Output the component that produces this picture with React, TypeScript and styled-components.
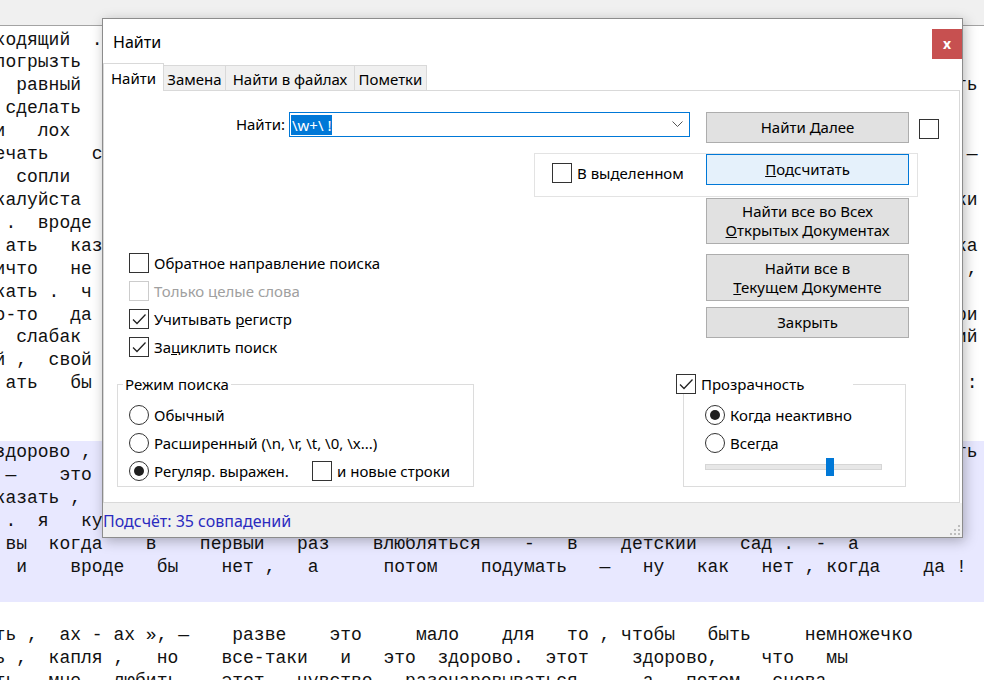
import React from 'react';
import styled, { createGlobalStyle } from 'styled-components';

const GlobalStyle = createGlobalStyle`
  html, body {
    margin: 0;
    padding: 0;
    background: #fff;
    overflow: hidden;
  }
`;

const UI_FONT = `"Noto Sans", "Open Sans", sans-serif`;

// editor text: each line is a list of [column, text] pairs (monospace grid)
type Piece = [number, string];

const place = (pieces: Piece[]) =>
  pieces.reduce((line, [col, text]) => line.padEnd(col, ' ') + text, '');

const LINES: { pieces: Piece[]; marked?: boolean }[] = [
  { pieces: [[0, 'ходящий'], [9, '.']] },
  { pieces: [[0, 'погрызть']] },
  { pieces: [[2, 'равный'], [89, 'ть']] },
  { pieces: [[1, 'сделать']] },
  { pieces: [[0, 'и'], [4, 'лох']] },
  { pieces: [[0, 'ечать'], [9, 'со'], [90, '—']] },
  { pieces: [[2, 'сопли']] },
  { pieces: [[0, 'калуйста'], [89, 'ки']] },
  { pieces: [[1, '.'], [4, 'вроде']] },
  { pieces: [[1, 'ать'], [7, 'каз'], [89, 'ка']] },
  { pieces: [[0, 'ичто'], [7, 'не'], [90, ',']] },
  { pieces: [[0, 'кать'], [5, '.'], [8, 'ч']] },
  { pieces: [[0, 'о-то'], [7, 'да'], [89, 'ри']] },
  { pieces: [[2, 'слабак'], [89, 'ий']] },
  { pieces: [[0, 'й'], [2, ','], [5, 'свой']] },
  { pieces: [[1, 'ать'], [7, 'бы'], [90, ':']] },
  { pieces: [] },
  { pieces: [] },
  { pieces: [[0, 'здорово'], [8, ','], [89, 'ть']], marked: true },
  { pieces: [[1, '—'], [6, 'это']], marked: true },
  { pieces: [[0, 'казать'], [7, ',']], marked: true },
  { pieces: [[1, '.'], [4, 'я'], [8, 'ку']], marked: true },
  {
    pieces: [
      [1, 'вы'], [5, 'когда'], [14, 'в'], [19, 'первый'], [28, 'раз'],
      [35, 'влюбляться'], [49, '-'], [53, 'в'], [58, 'детский'], [69, 'сад'],
      [73, '.'], [76, '-'], [79, 'а'],
    ],
    marked: true,
  },
  {
    pieces: [
      [2, 'и'], [7, 'вроде'], [15, 'бы'], [21, 'нет'], [25, ','], [29, 'а'],
      [36, 'потом'], [45, 'подумать'], [56, '—'], [60, 'ну'], [65, 'как'],
      [71, 'нет'], [75, ','], [77, 'когда'], [86, 'да'], [89, '!'],
    ],
    marked: true,
  },
  { pieces: [], marked: true },
  { pieces: [] },
  {
    pieces: [
      [0, 'ть'], [3, ','], [6, 'ах'], [9, '-'], [11, 'ах'], [14, '»,'], [17, '—'],
      [22, 'разве'], [31, 'это'], [39, 'мало'], [47, 'для'], [53, 'то'], [56, ','],
      [58, 'чтобы'], [66, 'быть'], [75, 'немножечко'],
    ],
  },
  {
    pieces: [
      [0, 'ь'], [2, ','], [5, 'капля'], [11, ','], [15, 'но'], [21, 'все-таки'],
      [32, 'и'], [36, 'это'], [41, 'здорово'], [48, '.'], [51, 'этот'],
      [59, 'здорово'], [66, ','], [71, 'что'], [77, 'мы'],
    ],
  },
  {
    pieces: [
      [0, 'ть'], [5, 'мне'], [11, 'любить'], [21, 'этот'], [28, 'чувство'],
      [38, 'разочаровываться'], [57, ','], [60, 'а'], [64, 'потом'], [72, 'снова'],
    ],
  },
];

const Screen = styled.div`
  position: relative;
  width: 984px;
  height: 680px;
  overflow: hidden;
  display: flex;
  flex-direction: column;
  background: #fff;
`;

const TopStrip = styled.div`
  flex: none;
  height: 25px;
  background: #f0f0f0;
`;

const Editor = styled.div`
  flex: 1;
  border-top: 1px solid #a3a3a3;
  padding-top: 2.5px;
  font-family: "Liberation Mono", "Courier New", monospace;
  font-size: 18px;
  color: #111;
`;

const CodeLine = styled.div<{ $marked?: boolean }>`
  height: 22.93px;
  line-height: 22.93px;
  white-space: pre;
  text-indent: -5.4px;
  background: ${(p) => (p.$marked ? '#e8e8ff' : 'transparent')};
`;

/* ---------- dialog window ---------- */

const Dialog = styled.section`
  position: absolute;
  left: 102px;
  top: 18px;
  width: 861px;
  height: 520px;
  box-sizing: border-box;
  border: 1px solid #8c8c8c;
  background: #fff;
  box-shadow: 2px 3px 12px rgba(0, 0, 0, 0.28);
  display: flex;
  flex-direction: column;
  font-family: ${UI_FONT};
  font-size: 15px;
  color: #000;
`;

const TitleBar = styled.header`
  flex: none;
  height: 43px;
  display: flex;
  align-items: flex-start;
  padding-left: 10px;
`;

const Title = styled.h1`
  flex: 1;
  margin: 12px 0 0;
  font-size: 16px;
  font-weight: 400;
  line-height: 22px;
`;

const CloseButton = styled.button`
  width: 30px;
  height: 30px;
  margin-top: 10px;
  padding: 0 0 2px;
  border: 0;
  background: #c75050;
  color: #fff;
  font: 700 14px ${UI_FONT};
  display: flex;
  align-items: center;
  justify-content: center;
`;

const TabStrip = styled.nav`
  flex: none;
  height: 29px;
  margin-bottom: -1px;
  display: flex;
  align-items: flex-end;
  position: relative;
  z-index: 1;
`;

const Tab = styled.div<{ $active?: boolean; $w: number }>`
  box-sizing: border-box;
  width: ${(p) => p.$w}px;
  height: ${(p) => (p.$active ? 28 : 25)}px;
  margin-bottom: ${(p) => (p.$active ? 0 : 1)}px;
  margin-right: -1px;
  padding-top: ${(p) => (p.$active ? 0 : 2)}px;
  border: 1px solid #d9d9d9;
  border-bottom: none;
  background: ${(p) => (p.$active ? '#fff' : '#f0f0f0')};
  display: flex;
  align-items: center;
  justify-content: center;
  line-height: 20px;
  white-space: nowrap;
`;

const Panel = styled.div`
  flex: 1;
  margin-right: 2px;
  padding-top: 21px;
  border: 1px solid #d9d9d9;
  display: grid;
  grid-template-columns: 602px 203px 1fr;
  grid-template-rows: 41px 44px 177px auto;
`;

const FindRow = styled.div`
  grid-column: 1;
  grid-row: 1;
  display: flex;
  align-items: flex-start;
  justify-content: flex-end;
  gap: 4px;
  padding-right: 16px;
`;

const FieldLabel = styled.label`
  line-height: 25px;
`;

const Combo = styled.div`
  box-sizing: border-box;
  width: 401px;
  height: 25px;
  border: 1px solid #0078d7;
  display: flex;
  align-items: center;
  padding: 0 6px 0 1px;
`;

const Selected = styled.span`
  padding: 0 1px;
  line-height: 20px;
  background: #0078d7;
  color: #fff;
  white-space: pre;
`;

const ComboArrow = styled.svg`
  margin-left: auto;
`;

const ActionButton = styled.button<{ $focused?: boolean; $h: number; $mt?: number }>`
  box-sizing: border-box;
  width: 203px;
  height: ${(p) => p.$h}px;
  margin-top: ${(p) => p.$mt ?? 0}px;
  padding: 0;
  border: 1px solid ${(p) => (p.$focused ? '#0078d7' : '#adadad')};
  background: ${(p) => (p.$focused ? '#e5f1fb' : '#e1e1e1')};
  color: #000;
  font: 15px/19px ${UI_FONT};
`;

const NextButton = styled(ActionButton)`
  grid-column: 2;
  grid-row: 1;
`;

const CountButton = styled(ActionButton)`
  grid-column: 2;
  grid-row: 2;
  z-index: 1;
`;

const SideBox = styled.div`
  grid-column: 3;
  grid-row: 1;
  padding: 7px 0 0 10px;
`;

const ScopeBox = styled.div`
  grid-column: 1 / 4;
  grid-row: 2;
  margin: 0 41px 0 430px;
  padding: 5px 0 0 17px;
  border: 1px solid #e3e3e3;
`;

const CheckList = styled.div`
  grid-column: 1;
  grid-row: 3;
  padding: 52px 0 0 25px;
`;

const ButtonStack = styled.div`
  grid-column: 2;
  grid-row: 3;
  display: flex;
  flex-direction: column;
  padding-top: 1px;
`;

const BottomRow = styled.div`
  grid-column: 1 / -1;
  grid-row: 4;
  display: flex;
  align-items: flex-start;
  padding-left: 13px;
`;

const Group = styled.fieldset<{ $w: number; $ml?: number; $pl: number }>`
  box-sizing: border-box;
  width: ${(p) => p.$w}px;
  height: 113px;
  min-width: 0;
  margin: 0 0 0 ${(p) => p.$ml ?? 0}px;
  padding: 7px 0 0 ${(p) => p.$pl}px;
  border: 1px solid #dcdcdc;
`;

const GroupLegend = styled.legend<{ $offset: number; $w?: number }>`
  box-sizing: border-box;
  width: ${(p) => (p.$w ? `${p.$w}px` : 'auto')};
  margin-left: ${(p) => p.$offset}px;
  padding: 0 2px;
  line-height: 20px;
  background: #fff;
`;

const Option = styled.label<{ $disabled?: boolean; $w?: number }>`
  height: 28px;
  width: ${(p) => (p.$w ? `${p.$w}px` : 'auto')};
  display: flex;
  align-items: center;
  gap: 5px;
  white-space: nowrap;
  color: ${(p) => (p.$disabled ? '#a0a0a0' : '#000')};
`;

const LegendOption = styled(Option)`
  height: 20px;
`;

const OptionText = styled.span`
  line-height: 20px;
`;

const OptionRow = styled.div`
  display: flex;
  align-items: center;
`;

const Box = styled.span<{ $disabled?: boolean }>`
  box-sizing: border-box;
  flex: none;
  width: 20px;
  height: 20px;
  border: 1px solid ${(p) => (p.$disabled ? '#cccccc' : '#333')};
  background: #fff;
  display: flex;
  align-items: center;
  justify-content: center;
`;

const Round = styled.span<{ $on?: boolean }>`
  box-sizing: border-box;
  flex: none;
  width: 20px;
  height: 20px;
  border: 1px solid #333;
  border-radius: 50%;
  background: #fff;
  display: flex;
  align-items: center;
  justify-content: center;

  &::after {
    content: '';
    display: ${(p) => (p.$on ? 'block' : 'none')};
    width: 10px;
    height: 10px;
    border-radius: 50%;
    background: #1f1f1f;
  }
`;

const Slider = styled.div`
  position: relative;
  width: 177px;
  height: 20px;
  display: flex;
  align-items: center;
`;

const Track = styled.div`
  box-sizing: border-box;
  width: 100%;
  height: 6px;
  border: 1px solid #d6d6d6;
  background: #e7e7e7;
`;

const Thumb = styled.div`
  position: absolute;
  top: 1px;
  width: 8px;
  height: 18px;
  background: #0078d7;
`;

const StatusBar = styled.footer`
  flex: none;
  height: 34px;
  padding-top: 2px;
  box-sizing: border-box;
  background: #f0f0f0;
  display: flex;
  align-items: center;
  color: #2b2bbf;
  font-size: 16px;
`;

const Grip = styled.svg`
  margin: auto 2px 2px auto;
  align-self: flex-end;
`;

const Checkbox: React.FC<{ checked?: boolean; disabled?: boolean }> = ({ checked, disabled }) => (
  <Box $disabled={disabled}>
    {checked && (
      <svg width="16" height="16" viewBox="0 0 16 16">
        <polyline points="2,8.5 6,12.5 14.5,3.5" fill="none" stroke="#222" strokeWidth="1.3" />
      </svg>
    )}
  </Box>
);

const App: React.FC = () => {
  return (
    <>
      <GlobalStyle />
      <Screen>
        <TopStrip />
        <Editor>
          {LINES.map((line, i) => (
            <CodeLine key={i} $marked={line.marked}>
              {place(line.pieces) || ' '}
            </CodeLine>
          ))}
        </Editor>

        <Dialog>
          <TitleBar>
            <Title>Найти</Title>
            <CloseButton>x</CloseButton>
          </TitleBar>

          <TabStrip>
            <Tab $active $w={61}>Найти</Tab>
            <Tab $w={63}>Замена</Tab>
            <Tab $w={130}>Найти в файлах</Tab>
            <Tab $w={73}>Пометки</Tab>
          </TabStrip>

          <Panel>
            <FindRow>
              <FieldLabel>Найти:</FieldLabel>
              <Combo>
                <Selected>{'\\w+\\ !'}</Selected>
                <ComboArrow width="11" height="7" viewBox="0 0 11 7">
                  <polyline points="0.5,0.5 5.5,5.5 10.5,0.5" fill="none" stroke="#555" strokeWidth="1" />
                </ComboArrow>
              </Combo>
            </FindRow>
            <NextButton $h={31}>Найти Далее</NextButton>
            <SideBox>
              <Checkbox />
            </SideBox>

            <ScopeBox>
              <Option>
                <Checkbox />
                <OptionText>В выделенном</OptionText>
              </Option>
            </ScopeBox>
            <CountButton $focused $h={31} $mt={1}>
              <u>П</u>одсчитать
            </CountButton>

            <CheckList>
              <Option>
                <Checkbox />
                <OptionText>Обратное направление поиска</OptionText>
              </Option>
              <Option $disabled>
                <Checkbox disabled />
                <OptionText>Только целые слова</OptionText>
              </Option>
              <Option>
                <Checkbox checked />
                <OptionText>
                  Учитывать <u>р</u>егистр
                </OptionText>
              </Option>
              <Option>
                <Checkbox checked />
                <OptionText>
                  За<u>ц</u>иклить поиск
                </OptionText>
              </Option>
            </CheckList>

            <ButtonStack>
              <ActionButton $h={46}>
                Найти все во Всех
                <br />
                <u>О</u>ткрытых Документах
              </ActionButton>
              <ActionButton $h={47} $mt={10}>
                Найти все в
                <br />
                <u>Т</u>екущем Документе
              </ActionButton>
              <ActionButton $h={31} $mt={6}>
                Закрыть
              </ActionButton>
            </ButtonStack>

            <BottomRow>
              <Group $w={357} $pl={11}>
                <GroupLegend $offset={-6}>Режим поиска</GroupLegend>
                <Option>
                  <Round />
                  <OptionText>Обычный</OptionText>
                </Option>
                <Option>
                  <Round />
                  <OptionText>Расширенный (\n, \r, \t, \0, \x...)</OptionText>
                </Option>
                <OptionRow>
                  <Option $w={183}>
                    <Round $on />
                    <OptionText>Регуляр. выражен.</OptionText>
                  </Option>
                  <Option>
                    <Checkbox />
                    <OptionText>и новые строки</OptionText>
                  </Option>
                </OptionRow>
              </Group>

              <Group $w={223} $ml={209} $pl={21}>
                <GroupLegend $offset={-31} $w={179}>
                  <LegendOption>
                    <Checkbox checked />
                    <OptionText>Прозрачность</OptionText>
                  </LegendOption>
                </GroupLegend>
                <Option>
                  <Round $on />
                  <OptionText>Когда неактивно</OptionText>
                </Option>
                <Option>
                  <Round />
                  <OptionText>Всегда</OptionText>
                </Option>
                <Slider>
                  <Track />
                  <Thumb style={{ left: `${(121 / 177) * 100}%` }} />
                </Slider>
              </Group>
            </BottomRow>
          </Panel>

          <StatusBar>
            Подсчёт: 35 совпадений
            <Grip width="11" height="11" viewBox="0 0 11 11">
              {[
                [9, 1], [9, 5], [5, 5], [9, 9], [5, 9], [1, 9],
              ].map(([x, y]) => (
                <rect key={`${x}-${y}`} x={x} y={y} width="2" height="2" fill="#bdbdbd" />
              ))}
            </Grip>
          </StatusBar>
        </Dialog>
      </Screen>
    </>
  );
};

export default App;
